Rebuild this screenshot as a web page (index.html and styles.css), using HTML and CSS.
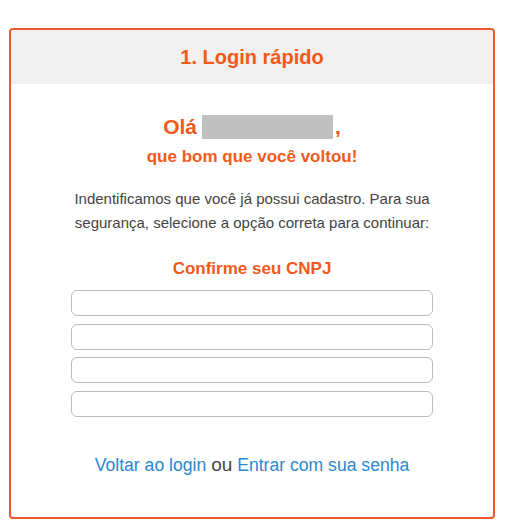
FILE: index.html
```html
<!DOCTYPE html>
<html lang="pt-BR">
<head>
  <meta charset="UTF-8">
  <meta name="viewport" content="width=device-width, initial-scale=1.0">
  <title>Login rápido</title>
  <link rel="stylesheet" href="styles.css">
</head>
<body>
  <div class="card">
    <!-- Cabeçalho -->
    <div class="card-header">
      <h2>1. Login rápido</h2>
    </div>

    <div class="card-body">
      <h3 class="greeting">Olá <span class="name-mask"></span>,</h3>
      <p class="subtitle">que bom que você voltou!</p>

      <p class="info">Indentificamos que você já possui cadastro. Para sua segurança, selecione a opção correta para continuar:</p>

      <h4 class="confirm-title">Confirme seu CNPJ</h4>
      <div class="options">
        <button class="option"></button>
        <button class="option"></button>
        <button class="option"></button>
        <button class="option"></button>
      </div>

      <p class="links">
        <a href="#">Voltar ao login</a> <span class="or">ou</span> <a href="#">Entrar com sua senha</a>
      </p>
    </div>
  </div>
</body>
</html>
```

FILE: styles.css
```css
body {
  font-family: "Liberation Sans", Arial, sans-serif;
  margin: 0;
  padding: 28px 0 0 9px;
  background-color: #fff;
}
.card {
  width: 482px;
  height: 487px;
  border: 2px solid #ea5a2e;
  border-radius: 4px;
  overflow: hidden;
}
.card-header {
  background-color: #f0f0f0;
  height: 54px;
  display: flex;
  align-items: center;
  justify-content: center;
}
.card-header h2 {
  margin: 0;
  font-size: 20px;
  color: #f15a1b;
}
.card-body {
  text-align: center;
  padding-top: 31px;
}
.greeting {
  margin: 0;
  font-size: 21px;
  color: #f15a1b;
  line-height: 24px;
  display: flex;
  justify-content: center;
  align-items: center;
}
.name-mask {
  display: inline-block;
  width: 131px;
  height: 24px;
  background-color: #c0c0c0;
  margin-left: 5px;
  margin-right: 2px;
}
.subtitle {
  margin: 8px 0 0;
  font-size: 17px;
  line-height: 20px;
  font-weight: bold;
  color: #f15a1b;
}
.info {
  margin: 20px auto 0;
  width: 400px;
  font-size: 15px;
  line-height: 24px;
  color: #444;
}
.confirm-title {
  margin: 24px 0 0;
  font-size: 17px;
  line-height: 20px;
  color: #f15a1b;
}
.options {
  margin: 11px auto 0;
  width: 362px;
  display: flex;
  flex-direction: column;
  gap: 7.6px;
}
.option {
  height: 26px;
  border: 1px solid #bbb;
  border-radius: 6px;
  background-color: #fff;
  padding: 0;
}
.links {
  margin: 37px 0 0;
  font-size: 17.6px;
  line-height: 22px;
}
.links a {
  color: #2b88cf;
  text-decoration: none;
}
.links .or {
  color: #444;
  font-size: 19px;
}
```
